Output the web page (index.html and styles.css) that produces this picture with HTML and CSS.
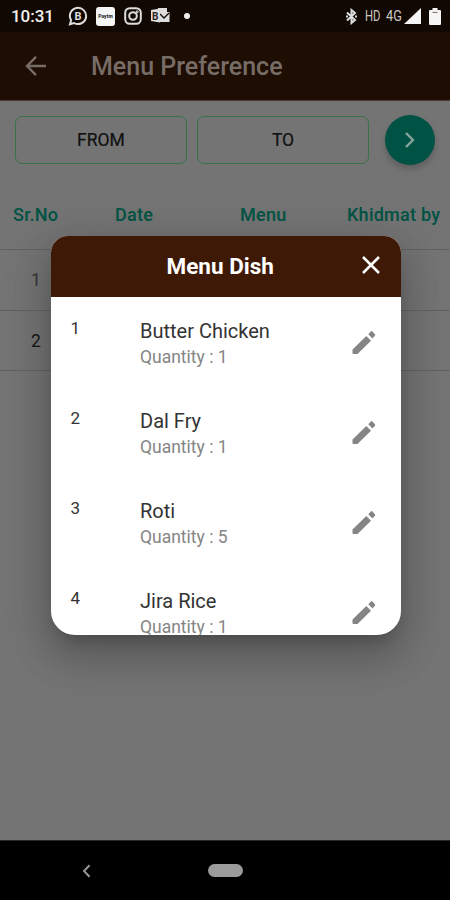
FILE: index.html
```html
<!DOCTYPE html>
<html lang="en">
<head>
<meta charset="utf-8">
<meta name="viewport" content="width=device-width">
<title>Menu Preference</title>
<link rel="stylesheet" href="styles.css">
</head>
<body>
<svg width="0" height="0" class="defs"><symbol id="pencil" viewBox="0 0 30 30"><path d="M3.5 22.5L17.3 9l4.7 4.7L8.5 27h-4q-1 0-1-1zM19.3 7.2l2.6-2.7q.8-.8 1.6 0l2.4 2.7q.8.8 0 1.6l-2.4 2.6z"/></symbol></svg>
<div class="phone">
  <header class="status">
    <span class="time">10:31</span>
    <div class="notifications">
      <svg width="20" height="20" viewBox="0 0 20 20"><path d="M2 18.2l1.1-4A8.1 8.1 0 1 1 6 17z" fill="none" stroke="#ddd" stroke-width="2"/><text x="10" y="13.9" text-anchor="middle" class="glyph-b">B</text></svg>
      <span class="paytm">Paytm</span>
      <svg width="18" height="18" viewBox="0 0 18 18" fill="none" stroke="#ddd" stroke-width="2"><rect x="1.2" y="1.2" width="15.6" height="15.6" rx="4.5"/><circle cx="9" cy="9" r="3.8"/><circle cx="13.2" cy="4.8" r=".5"/></svg>
      <svg width="19" height="16" viewBox="0 0 19 16"><path d="M7 0h9v4h2.5v10H7z" fill="#ddd"/><path d="M9 6l4 4 5-5" fill="none" stroke="#120802" stroke-width="1.3"/><path d="M0 2l9-1.5v14L0 13z" fill="#ddd"/><text x="4.3" y="11.5" text-anchor="middle" class="glyph-o">B</text></svg>
      <i class="dot"></i>
    </div>
    <div class="system">
      <svg class="bluetooth" width="11" height="17" viewBox="0 0 11 17" fill="none" stroke="#ddd" stroke-width="2"><path d="M1 4.5l8 7.5-3.5 3V2L9 5l-8 7.5"/><path d="M0 8.5h2M9 8.5h2"/></svg>
      <span class="hd">HD</span><span class="fourg">4G</span>
      <svg class="signal" width="17" height="16" viewBox="0 0 17 16"><path d="M0 16L17 0v16z" fill="#f5f5f5"/></svg>
      <svg width="12" height="17" viewBox="0 0 12 17"><path d="M1 2h2.5V0h5v2H11q1 0 1 1v13q0 1-1 1H1q-1 0-1-1V3q0-1 1-1z" fill="#f5f5f5"/><path d="M3.5 4.4h5" stroke="#776f69"/></svg>
    </div>
  </header>
  <div class="appbar">
    <svg width="22" height="22" viewBox="0 0 22 22" fill="none" stroke="#776c66" stroke-width="2.4"><path d="M21 10H3M11 .8L2 10l9 9.2"/></svg>
    <h1>Menu Preference</h1>
  </div>
  <main>
    <div class="filters">
      <button class="date">FROM</button>
      <button class="date">TO</button>
      <button class="go" aria-label="Search"><svg width="12" height="18" viewBox="0 0 12 18" fill="none" stroke="#89a59d" stroke-width="2.3"><path d="M2 2l7 7-7 7"/></svg></button>
    </div>
    <div class="thead"><span>Sr.No</span><span>Date</span><span>Menu</span><span>Khidmat by</span></div>
    <div class="trow"><span>1</span></div>
    <div class="trow dark"><span>2</span></div>
  </main>
  <footer class="navbar">
    <svg width="9" height="14" viewBox="0 0 9 14" fill="none" stroke="#969696" stroke-width="2"><path d="M7.5 1.2L2 7l5.5 5.8"/></svg>
    <i class="home"></i>
  </footer>
  <section class="dialog">
    <div class="dialog-head">
      <h2>Menu Dish</h2>
      <svg width="20" height="20" viewBox="0 0 20 20" stroke="#fff" stroke-width="2.5"><path d="M2 2l16 16M18 2L2 18"/></svg>
    </div>
    <ul>
      <li><span class="num">1</span><div class="dish"><b>Butter Chicken</b><small>Quantity : 1</small></div><svg class="pencil"><use href="#pencil"/></svg></li>
      <li><span class="num">2</span><div class="dish"><b>Dal Fry</b><small>Quantity : 1</small></div><svg class="pencil"><use href="#pencil"/></svg></li>
      <li><span class="num">3</span><div class="dish"><b>Roti</b><small>Quantity : 5</small></div><svg class="pencil"><use href="#pencil"/></svg></li>
      <li><span class="num">4</span><div class="dish"><b>Jira Rice</b><small>Quantity : 1</small></div><svg class="pencil"><use href="#pencil"/></svg></li>
    </ul>
  </section>
</div>
</body>
</html>
```
FILE: styles.css
```css
* { box-sizing: border-box; margin: 0; padding: 0; }
body { width: 450px; height: 900px; overflow: hidden; font-family: Roboto, "Liberation Sans", sans-serif; }
svg { display: block; flex: none; }
.defs { position: absolute; }
.phone { position: relative; display: flex; flex-direction: column; width: 450px; height: 900px; overflow: hidden; background: #747474; }
.status { height: 32px; display: flex; align-items: center; padding: 0 9px 0 11px; background: #120802; color: #f2f0ef; }
.time { font-size: 17px; font-weight: 500; width: 57px; letter-spacing: -.05px; }
.notifications { display: flex; align-items: center; }
.notifications > :nth-child(2) { margin-left: 8px; }
.notifications > :nth-child(3) { margin-left: 9px; }
.notifications > :nth-child(4) { margin-left: 9px; }
.glyph-b { font: 700 11px Roboto, sans-serif; fill: #ddd; }
.glyph-o { font: 700 10px Roboto, sans-serif; fill: #2b221c; }
.paytm { width: 19px; height: 19px; border-radius: 3px; background: #f5f5f5; color: #333; font-size: 5px; font-weight: 900; line-height: 19px; text-align: center; }
.dot { width: 6px; height: 6px; border-radius: 50%; background: #eee; margin-left: 14px; }
.system { margin-left: auto; display: flex; align-items: center; color: #cbc6c2; }
.bluetooth { margin-right: 8px; }
.hd { width: 21px; font-size: 14.5px; transform: scaleX(.78); transform-origin: left; }
.fourg { width: 18px; font-size: 15px; transform: scaleX(.85); transform-origin: left; }
.signal { margin-right: 8px; }
.appbar { height: 69px; padding: 1px 0 0 25px; display: flex; align-items: center; background: #1d0d03; border-bottom: 1px solid #493c35; }
.appbar h1 { margin-left: 44px; font-size: 25px; font-weight: 500; color: #776c66; white-space: nowrap; }
main { flex: 1; }
.filters { display: flex; align-items: flex-start; padding: 14px 15px 0; height: 87px; }
button { font-family: inherit; }
.date { width: 172px; height: 48px; margin: 1px 10px 0 0; border: 1.5px solid #397244; border-radius: 7px; background: transparent; color: #101010; font-size: 17.5px; font-weight: 400; -webkit-text-stroke: .2px #101010; }
.go { width: 50px; height: 50px; margin-left: 6px; border: 0; border-radius: 50%; background: #005344; display: flex; align-items: center; justify-content: center; box-shadow: 0 4px 6px #0003; flex: none; }
.thead { height: 62px; display: grid; grid-template-columns: 102px 125px 107px 1fr; padding: 16px 0 0 13px; border-bottom: 1px solid #626262; color: #005343; font-size: 18px; font-weight: 500; letter-spacing: .25px; white-space: nowrap; }
.trow { height: 60.5px; border-bottom: 1px solid #626262; padding: 20px 31px; font-size: 17.5px; color: #333; }
.trow.dark { color: #151515; }
.navbar { height: 60px; background: #000; border-top: 1px solid #292929; display: flex; align-items: center; padding-left: 82px; }
.home { width: 35px; height: 13px; border-radius: 7px; background: #9b9b9b; margin-left: 117px; }
.dialog { position: absolute; left: 50.5px; top: 235.5px; width: 350px; height: 399.5px; border-radius: 17px 17px 24px 24px; overflow: hidden; background: #fff; box-shadow: 0 11px 15px -7px #0003, 0 24px 38px 3px #00000024, 0 9px 46px 8px #0000001f; }
.dialog-head { height: 61.5px; background: #3e1906; display: flex; align-items: center; padding: 0 0 2px 116px; color: #fff; }
.dialog-head h2 { width: 194px; padding-top: 2px; font-size: 22.5px; font-weight: 700; }
ul { list-style: none; }
li { height: 90px; display: flex; padding: 21px 22px 0 20px; }
.num { width: 70px; font-size: 17px; line-height: 20px; color: #333; }
.dish { width: 210px; display: flex; flex-direction: column; }
.dish b { font-size: 20px; line-height: 26px; font-weight: 400; color: #333; }
.dish small { font-size: 17.5px; line-height: 27px; color: #858585; }
.pencil { width: 30px; height: 30px; margin-top: 9px; fill: #858585; }
```
